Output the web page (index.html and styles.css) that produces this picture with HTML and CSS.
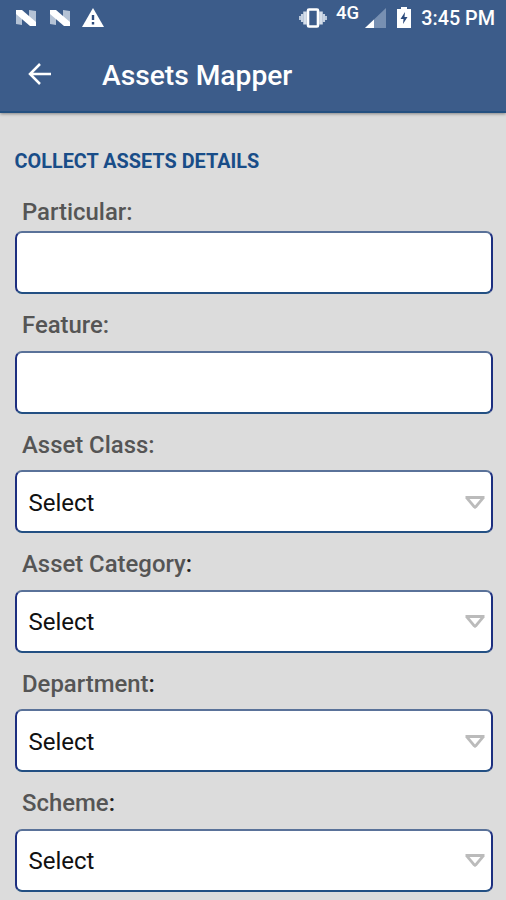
FILE: index.html
```html
<!DOCTYPE html>
<html lang="en">
<head>
<meta charset="utf-8">
<title>Assets Mapper</title>
<link rel="stylesheet" href="styles.css">
</head>
<body>
<header class="header">
  <div class="status">
    <svg class="nougat" width="22" height="18" viewBox="0 0 22 18"><path d="M1 1l6 3v12l-6-1zM14 1l7 1v15l-7-3z" fill="#b4c2d5"/><path d="M1 1h6l14 12v4h-6L1 5z" fill="#fff"/></svg>
    <svg class="nougat" width="22" height="18" viewBox="0 0 22 18"><path d="M1 1l6 3v12l-6-1zM14 1l7 1v15l-7-3z" fill="#b4c2d5"/><path d="M1 1h6l14 12v4h-6L1 5z" fill="#fff"/></svg>
    <svg class="warning" width="22" height="19" viewBox="0 0 22 19"><path d="M11 0L22 19H0z" fill="#fff"/><path d="M11 7v5M11 14v2.500" stroke="#2c4b7c" stroke-width="2.400"/></svg>
    <svg class="vibrate" width="28" height="20" viewBox="0 0 28 20"><path d="M6 3.500v13M22 3.500v13" stroke="#d5deea" stroke-width="3.500"/><path d="M3.200 6v8M24.800 6v8" stroke="#c6d2e2" stroke-width="2.500"/><path d="M1 8v4M27 8v4" stroke="#b9c7da" stroke-width="2"/><rect x="9" y="1.500" width="10" height="17" rx="1" fill="none" stroke="#fff" stroke-width="2.600"/></svg>
    <span class="network">4G</span>
    <svg class="signal" width="21" height="20" viewBox="0 0 21 20"><path d="M21 0v20H0z" fill="#7890b2"/><path d="M9 11.400V20H0z" fill="#fff"/></svg>
    <svg class="battery" width="14" height="21" viewBox="0 0 14 21"><path d="M4 0h6v2h4v19H0V2h4z" fill="#fff"/><path d="M8 5L3.500 12H6.500L6 17l4.500-7H7.500z" fill="#2c4b7c"/></svg>
    <span class="clock">3:45 PM</span>
  </div>
  <div class="appbar">
    <svg class="back" width="24" height="22" viewBox="0 0 24 22"><path d="M23 11H2M12 1L2 11l10 10" fill="none" stroke="#fff" stroke-width="2.500"/></svg>
    <h1 class="title">Assets Mapper</h1>
  </div>
</header>
<main class="form">
  <h2 class="heading">COLLECT ASSETS DETAILS</h2>
  <div class="group first"><div class="label">Particular:</div><div class="field"></div></div>
  <div class="group"><div class="label">Feature:</div><div class="field"></div></div>
  <div class="group"><div class="label">Asset Class:</div><div class="field"><span class="value">Select</span><svg width="22" height="16" viewBox="0 0 22 16"><path d="M1.500 2h19v2.500L13 13.500 11 15 9 13.500 1.500 4.500z" fill="#bbb"/><path d="M5.500 5h11L11 11.500z" fill="#fff"/></svg></div></div>
  <div class="group"><div class="label">Asset Category<span class="dark">:</span></div><div class="field"><span class="value">Select</span><svg width="22" height="16" viewBox="0 0 22 16"><path d="M1.500 2h19v2.500L13 13.500 11 15 9 13.500 1.500 4.500z" fill="#bbb"/><path d="M5.500 5h11L11 11.500z" fill="#fff"/></svg></div></div>
  <div class="group"><div class="label">Department<span class="dark">:</span></div><div class="field"><span class="value">Select</span><svg width="22" height="16" viewBox="0 0 22 16"><path d="M1.500 2h19v2.500L13 13.500 11 15 9 13.500 1.500 4.500z" fill="#bbb"/><path d="M5.500 5h11L11 11.500z" fill="#fff"/></svg></div></div>
  <div class="group"><div class="label">Scheme<span class="dark">:</span></div><div class="field"><span class="value">Select</span><svg width="22" height="16" viewBox="0 0 22 16"><path d="M1.500 2h19v2.500L13 13.500 11 15 9 13.500 1.500 4.500z" fill="#bbb"/><path d="M5.500 5h11L11 11.500z" fill="#fff"/></svg></div></div>
</main>
</body>
</html>
```
FILE: styles.css
```css
* { box-sizing: border-box; }
body {
  margin: 0;
  height: 900px;
  overflow: hidden;
  background: #dcdcdc;
  font-family: Roboto, "Liberation Sans", sans-serif;
}
svg { display: block; flex: none; }
h1, h2 { margin: 0; }
.header {
  height: 113px;
  background: #3c5c8a;
  border-bottom: 2px solid #245080;
  box-shadow: 0 1px 3px rgba(0, 0, 0, .4);
  color: #fff;
}
.status {
  display: flex;
  align-items: center;
  height: 36px;
  padding: 0 11px 0 15px;
}
.nougat { margin-right: 12px; }
.warning { margin: -2px 0 0 -1px; }
.vibrate { margin-left: auto; }
.network {
  margin: 0 6px 10px 9px;
  font-size: 18.5px;
  line-height: 20px;
  font-weight: 500;
}
.battery { margin: -2px 10px 0 11px; }
.clock {
  font-size: 19.8px;
  font-weight: 500;
}
.appbar {
  display: flex;
  align-items: center;
  height: 76px;
  padding-left: 28px;
}
.title {
  margin-left: 50px;
  padding-top: 3px;
  font-size: 28.2px;
  line-height: 32px;
  font-weight: 500;
}
.form { padding: 34px 13.5px 0 14.5px; }
.heading {
  padding-top: 2px;
  color: #194d88;
  font-size: 19.85px;
  line-height: 26px;
  font-weight: 700;
}
.label {
  padding: 17px 7.5px 11.5px;
  color: #555;
  font-size: 23.9px;
  line-height: 28px;
  font-weight: 500;
}
.first .label { padding: 22.5px 7.5px 5.5px; }
.dark { color: #222; }
.field {
  display: flex;
  align-items: center;
  justify-content: space-between;
  height: 63px;
  padding: 0 5px 0 12px;
  background: #fff;
  border: 2.5px solid;
  border-color: #5a7299 #1d2f80 #235083 #1d2f80;
  border-radius: 7px;
  color: #111;
  font-size: 24px;
}
.value { padding-top: 2px; }
```
